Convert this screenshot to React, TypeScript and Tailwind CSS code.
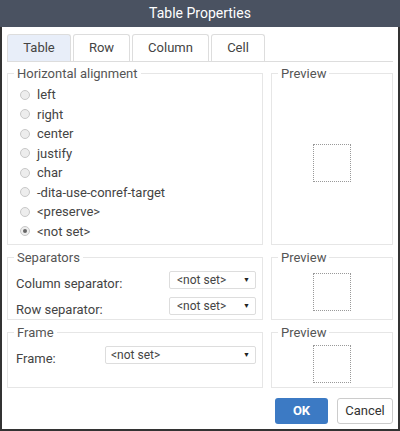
import React from "react";

function Radio({ checked }: { checked?: boolean }) {
  return (
    <span className="w-[10px] h-[10px] rounded-full border border-[#c8c8c8] bg-[#ededed] flex items-center justify-center shrink-0">
      {checked && <span className="w-[4px] h-[4px] rounded-full bg-[#666]" />}
    </span>
  );
}

function Select({ w, pl }: { w: string; pl: string }) {
  return (
    <div className={`${w} ${pl} h-[18px] border border-[#ddd] rounded-[2px] bg-white flex items-center pr-[5px] text-[12px] text-[#444]`}>
      <span className="flex-1 leading-none">&lt;not set&gt;</span>
      <span className="text-[7px] leading-none text-[#222]">▼</span>
    </div>
  );
}

function Legend({ children }: { children: React.ReactNode }) {
  return <legend className="ml-[6px] px-[3px] text-[13px] leading-[15px] text-[#555]">{children}</legend>;
}

function Preview() {
  return (
    <fieldset className="w-[122px] border border-[#e6e6e6] flex flex-col">
      <Legend>Preview</Legend>
      <div className="flex-1 flex items-center justify-center">
        <div className="w-[38px] h-[38px] border border-dotted border-[#999]" />
      </div>
    </fieldset>
  );
}

export default function App() {
  const items = ["left", "right", "center", "justify", "char", "-dita-use-conref-target", "<preserve>", "<not set>"];
  const tabs = [
    { t: "Table", w: "w-[64px]", active: true },
    { t: "Row", w: "w-[57px]" },
    { t: "Column", w: "w-[77px]" },
    { t: "Cell", w: "w-[54px]" },
  ];
  return (
    <div className="w-[400px] h-[431px] bg-white flex flex-col font-['Roboto',sans-serif]">
      <div className="h-[27px] bg-[#4a5261] text-white text-[14px] flex items-center justify-center shrink-0">
        Table Properties
      </div>
      <div className="flex-1 border-x-2 border-b-2 border-[#333] px-[5px] pt-[7px] flex flex-col">
        <div className="flex gap-[2px] border-b border-[#ddd]">
          {tabs.map((tb) => (
            <div
              key={tb.t}
              className={`${tb.w} h-[27px] border border-b-0 border-[#ddd] rounded-t-[3px] flex items-center justify-center text-[13px] text-[#444] ${tb.active ? "bg-[#e8eef9]" : "bg-white"}`}
            >
              {tb.t}
            </div>
          ))}
        </div>

        <div className="mt-[4px] flex gap-[8px]">
          <fieldset className="w-[256px] border border-[#e6e6e6]">
            <Legend>Horizontal alignment</Legend>
            <div className="pl-[12px] pt-[4px] pb-[3px]">
              {items.map((it, i) => (
                <div key={it} className="h-[19.5px] flex items-center gap-[7px] text-[13px] text-[#444]">
                  <Radio checked={i === 7} />
                  <span>{it}</span>
                </div>
              ))}
            </div>
          </fieldset>
          <Preview />
        </div>

        <div className="mt-[5px] flex gap-[8px]">
          <fieldset className="w-[256px] border border-[#e6e6e6]">
            <Legend>Separators</Legend>
            <div className="pl-[8px] pr-[6px] pt-[6px] pb-[4px] flex flex-col gap-[8px]">
              <div className="h-[18px] flex items-start justify-between">
                <span className="mt-[5px] text-[13px] leading-[15px] text-[#444]">Column separator:</span>
                <Select w="w-[87px]" pl="pl-[7px]" />
              </div>
              <div className="h-[18px] flex items-start justify-between">
                <span className="mt-[5px] text-[13px] leading-[15px] text-[#444]">Row separator:</span>
                <Select w="w-[87px]" pl="pl-[7px]" />
              </div>
            </div>
          </fieldset>
          <Preview />
        </div>

        <div className="mt-[5px] flex gap-[8px]">
          <fieldset className="w-[256px] border border-[#e6e6e6]">
            <Legend>Frame</Legend>
            <div className="pl-[8px] pr-[6px] pt-[6px] pb-[23px]">
              <div className="h-[18px] flex items-start justify-between">
                <span className="mt-[5px] text-[13px] leading-[15px] text-[#444]">Frame:</span>
                <Select w="w-[151px]" pl="pl-[5px]" />
              </div>
            </div>
          </fieldset>
          <Preview />
        </div>

        <div className="mt-[10px] flex justify-end gap-[9px]">
          <button className="w-[53px] h-[26px] rounded-[3px] bg-[#3c7ac4] text-white text-[13px] font-bold">OK</button>
          <button className="w-[56px] h-[26px] rounded-[3px] border border-[#ccc] bg-white text-[#333] text-[13px]">Cancel</button>
        </div>
      </div>
    </div>
  );
}
